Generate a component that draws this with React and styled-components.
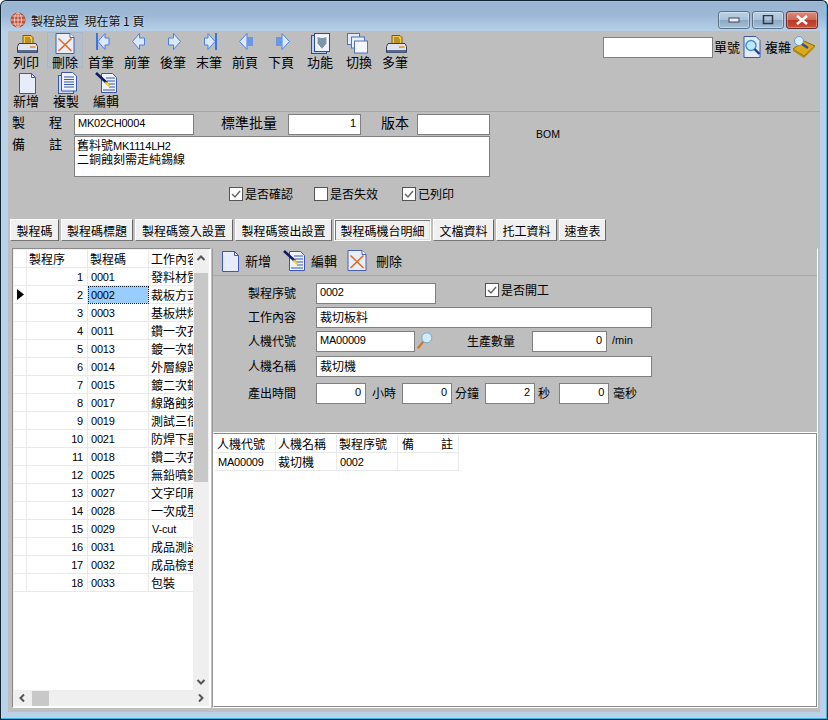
import React from 'react';
import styled, { createGlobalStyle } from 'styled-components';

const FONT = `"Noto Sans CJK TC", "Liberation Sans", sans-serif`;
const LATIN = `"Liberation Sans", "Noto Sans CJK TC", sans-serif`;

const Global = createGlobalStyle`
  html, body { margin: 0; padding: 0; background: #fff; }
  body { font-family: ${FONT}; font-size: 12px; color: #000; }
  * { box-sizing: border-box; }
`;

const Win = styled.div`
  width: 828px; height: 720px; display: flex; flex-direction: column;
  background: linear-gradient(#98b4d2 0, #9db8d5 14px, #b9d2ea 31px, #b9d2ea 100%);
  border: 1px solid #123; border-bottom-color: #0a2a3a; border-radius: 6px 6px 0 0;
  box-shadow: inset 0 0 0 1px #fff2, inset -1px -1px 0 #2ad;
  padding: 0 7px 7px 7px; overflow: hidden;
`;
const TitleBar = styled.div`height: 30px; display: flex; align-items: center; padding: 0 2px 0 2px; flex: none;`;
const TitleText = styled.div`font-size: 12px; margin-left: 5px; padding-top: 8px; color: #111; text-shadow: 0 0 3px #dbe8f5; white-space: pre;`;
const TitleSpacer = styled.div`flex: 1;`;
const WinBtns = styled.div`display: flex; gap: 2px; margin-top: 8px;`;
const WinBtn = styled.div`
  width: 32px; height: 18px; border: 1px solid ${p => p.$close ? '#6b2a2a' : '#5f7387'}; border-radius: 3px;
  background: ${p => p.$close ? 'linear-gradient(#d88b7c, #cd6a58 48%, #b93a24 52%, #c9503e)' : 'linear-gradient(#bcd0e4, #a9c2da 48%, #8ba8c4 52%, #a6c0d8)'};
  box-shadow: inset 0 0 0 1px #ffffff55; display: flex; align-items: center; justify-content: center;
`;

const Client = styled.div`flex: 1; min-height: 0; background: #bebebe; display: flex; flex-direction: column;`;
const Toolbar = styled.div`height: 81px; flex: none; display: flex; border-bottom: 1px solid #a6a6a6; justify-content: space-between;`;
const ToolRows = styled.div`display: flex; flex-direction: column;`;
const ToolRow = styled.div`display: flex; gap: ${p => p.$gap || 0}px; height: 39px; padding-top: 1px;`;
const ToolBtn = styled.div`
  width: ${p => p.$w || 36}px; height: 36px; display: flex; flex-direction: column; align-items: center; flex: none;
  margin-right: ${p => p.$mr || 0}px;
  font-size: 13px; line-height: 14px; white-space: nowrap; padding-top: 1px;
  ${p => p.$hot ? 'background: #b4bfca; box-shadow: inset 0 0 0 1px #a9b8c6;' : ''}
`;
const ToolIcon = styled.svg`width: ${p => p.$s || 24}px; height: 22px; flex: none; display: block;`;
const Search = styled.div`display: flex; align-items: center; height: 26px; margin-top: 3px; padding-right: 5px; font-size: 13px;`;
const SearchInput = styled.div`width: 110px; height: 21px; background: #fff; border: 1px solid #808080;`;
const SearchLabel = styled.span`margin: 0 2px 0 1px; line-height: 14px;`;

const Header = styled.div`height: 107px; flex: none; display: flex; flex-direction: column; padding-top: 2px;`;
const HeaderTop = styled.div`display: flex;`;
const HeaderLeft = styled.div`display: flex; flex-direction: column; gap: 1px;`;
const HeaderRow = styled.div`display: flex; align-items: flex-start;`;
const SpacedLabel = styled.div`
  width: 50px; margin: 0 12px 0 4px; display: flex; justify-content: space-between; font-size: 13px; line-height: 16px;
`;
const BigLabel = styled.div`font-size: 14px; line-height: 17px; margin: 0 ${p => p.$r}px 0 ${p => p.$l}px; white-space: nowrap;`;
const Field = styled.div`
  width: ${p => p.$w}px; height: 21px; flex: none; background: #fff; border: 1px solid #808080; overflow: hidden; white-space: nowrap;
  padding: 0 ${p => p.$right ? '4px' : '3px'}; text-align: ${p => p.$right ? 'right' : 'left'};
  font-family: ${p => p.$latin ? LATIN : FONT}; font-size: ${p => p.$latin ? '11px' : '12px'}; line-height: 17px;
  ${p => p.$latin ? 'letter-spacing: -0.2px;' : ''}
`;
const Memo = styled.div`
  width: 416px; height: 41px; background: #fff; border: 1px solid #808080; padding: 1px 2px; font-size: 12px; line-height: 14px; white-space: pre-line;
`;
const Latin = styled.span`font-family: ${LATIN}; font-size: 11px; line-height: 0; letter-spacing: -0.2px;`;
const Bom = styled.div`font-family: ${LATIN}; font-size: 10.500px; margin: 13px 0 0 46px; line-height: 14px;`;
const ChecksRow = styled.div`display: flex; padding-left: 221px; margin-top: 10px; height: 14px;`;
const Check = styled.div`display: flex; align-items: center; gap: 2px; font-size: 12px; line-height: 14px; margin-right: ${p => p.$mr || 0}px; white-space: nowrap;`;
const Box = styled.svg`width: 14px; height: 14px; flex: none; display: block;`;

const Tabs = styled.div`display: flex; height: 22px; flex: none; padding-left: 2px; gap: 2px;`;
const Tab = styled.div`
  width: ${p => p.$w}px; height: 22px; display: flex; align-items: center; justify-content: center; white-space: nowrap; font-size: 12px;
  background: #f0f0f0; border: 1px solid; border-color: #fff #666 #777 #fff;
  ${p => p.$active ? 'border-color: #fdfdfd; box-shadow: inset 1px 1px 0 #777, inset -1px -1px 0 #ddd; padding-top: 1px;' : ''}
`;

const Main = styled.div`flex: 1; min-height: 0; display: flex; padding: 7px 2px 4px 4px; gap: 1px;`;
const Frame = styled.div`
  border: 1px solid; border-color: #8a8a8a #fff #fff #8a8a8a; background: #fff; padding: 1px; display: flex; flex-direction: column;
  box-shadow: inset 1px 1px 0 #f0f0f0;
`;
const LeftFrame = styled(Frame)`width: 199px; flex: none;`;
const RightFrame = styled(Frame)`flex: 1; padding: 0; background: #bebebe; border-top-color: #bebebe; box-shadow: none; border-left-color: #9a9a9a;`;
const GridArea = styled.div`flex: 1; min-height: 0; display: flex;`;
const GridBody = styled.div`width: 179px; flex: none; overflow: hidden; background: #fff;`;
const GridRow = styled.div`display: flex; height: 18px;`;
const Cell = styled.div`
  width: ${p => p.$w}px; flex: none; height: 18px; overflow: hidden; white-space: nowrap;
  border-right: 1px solid #e9e9e9; border-bottom: 1px solid #e9e9e9;
  padding: 0 ${p => p.$right ? '4px' : p.$latin ? '3px' : '2px'};
  text-align: ${p => p.$right ? 'right' : 'left'}; line-height: 17px; font-size: 12px;
  font-family: ${p => p.$latin ? LATIN : FONT};
  ${p => p.$latin ? 'font-size: 11px; line-height: 18px; letter-spacing: -0.2px;' : ''}
  ${p => p.$sel ? 'background: #99ccff; outline: 1px dotted #123; outline-offset: -1px;' : ''}
`;
const IndCell = styled(Cell)`padding: 0; display: flex; align-items: center; justify-content: center;`;
const ClipCell = styled(Cell)`border-right: 0;`;
const VScroll = styled.div`width: 16px; flex: none; background: #efefef; display: flex; flex-direction: column; align-items: center; padding: 0 1px;`;
const VThumb = styled.div`width: 14px; height: 209px; background: #c8c8c8; margin-top: 7px;`;
const Arrow = styled.svg`width: 16px; height: 16px; display: block; flex: none;`;
const VFill = styled.div`flex: 1;`;
const HScroll = styled.div`height: 16px; flex: none; background: #efefef; display: flex; align-items: center;`;
const HThumb = styled.div`width: 17px; height: 15px; background: #c8c8c8; margin-left: 2px;`;
const HFill = styled.div`flex: 1;`;

const SubBar = styled.div`height: 27px; flex: none; display: flex; align-items: flex-start; padding: 1px 0 0 4px; border-bottom: 1px solid #a8a8a8; font-size: 13px;`;
const SubItem = styled.div`display: flex; align-items: center; gap: ${p => p.$gap}px; width: ${p => p.$w ? p.$w + 'px' : 'auto'}; line-height: 16px;`;
const Form = styled.div`height: 157px; flex: none; display: flex; flex-direction: column; padding: 7px 0 0 35px; border-bottom: 1px solid #fff;`;
const FormRow = styled.div`display: flex; align-items: flex-start; margin-bottom: ${p => p.$mb ?? 3}px; height: 21px;`;
const FormLabel = styled.div`width: 68px; flex: none; line-height: 19px; font-size: 12px;`;
const Inline = styled.div`line-height: 19px; font-size: ${p => p.$latin ? '11px' : '12px'}; font-family: ${p => p.$latin ? LATIN : FONT}; margin: 0 ${p => p.$r || 0}px 0 ${p => p.$l || 0}px; white-space: nowrap;`;
const TableArea = styled.div`flex: 1; background: #fff; padding: 1px 0 0 1px; border: 1px solid #8a8a8a; border-left-color: #fff;`;
const SpacedCell = styled.div`display: flex; justify-content: space-between; padding: 0 3px 0 2px;`;
const MagBox = styled.svg`width: 20px; height: 20px; flex: none; display: block;`;

const P = ({ children, s }) => <ToolIcon $s={s} viewBox={`0 0 ${s || 24} 22`}>{children}</ToolIcon>;
const PrinterI = () => <P>
  <path d="M9 2.500h8l2 2v6H9z" fill="#f4c94a" stroke="#7a5a10" />
  <path d="M11 5h5M11 7h6M11 9h6" stroke="#7a5a10" />
  <path d="M5 10.500h17l1.500 3v6H3.500v-6z" fill="#dfe4ee" stroke="#33415e" />
  <rect x="4" y="17" width="19" height="2.500" fill="#5a6a8e" />
  <path d="M16 14h5.500" stroke="#e8892a" strokeWidth="1.300" />
</P>;
const DocBase = ({ children }) => <P>
  <path d="M3 .5h14l4 4v16H3z" fill="#e9eefb" stroke="#4a5fb0" />
  <path d="M17 .5v4h4" fill="#fff" stroke="#4a5fb0" />
  {children}
</P>;
const DeleteI = () => <DocBase><path d="M5.500 5.500l13 12.500M18.500 5.500L5.500 18" stroke="#e46a1e" strokeWidth="1.600" /></DocBase>;
const NewI = () => <P>
  <path d="M5.500 1.500h12l4 4v16h-16z" fill="#e8ecfa" stroke="#3f55b5" />
  <path d="M17.500 1.500v4h4z" fill="#fff" stroke="#3f55b5" />
</P>;
const arrowFill = '#dce8fc', arrowStroke = '#4f7fe0';
const FirstI = () => <P><rect x="7" y="0" width="2" height="17" fill="#3e73e6" /><path d="M9 8.500l7-8v4.500h4v7h-4v4.500z" fill={arrowFill} stroke={arrowStroke} /></P>;
const PrevI = () => <P><path d="M7.500 8.500l7-8v4.500h5v7h-5v4.500z" fill={arrowFill} stroke={arrowStroke} /></P>;
const NextI = () => <P><path d="M19.500 8.500l-7-8v4.500h-5v7h5v4.500z" fill={arrowFill} stroke={arrowStroke} /></P>;
const LastI = () => <P><rect x="18" y="0" width="2" height="17" fill="#3e73e6" /><path d="M18 8.500l-7-8v4.500H7.500v7H11v4.500z" fill={arrowFill} stroke={arrowStroke} /></P>;
const PrevPageI = () => <P><path d="M6.500 8.500l7.500-8v16z" fill={arrowFill} stroke={arrowStroke} /><rect x="14" y="4" width="6" height="9" fill="#6a97e8" /></P>;
const NextPageI = () => <P><path d="M20.500 8.500l-7.500-8v16z" fill={arrowFill} stroke={arrowStroke} /><rect x="7" y="4" width="6" height="9" fill="#6a97e8" /></P>;
const FuncI = () => <P>
  <rect x="3.500" y="2.500" width="15" height="18" fill="#bcd0f4" stroke="#2c4aa6" />
  <rect x="6.500" y=".5" width="15" height="18" fill="#eef2fd" stroke="#2c4aa6" />
  <path d="M9 3.500l5 1 5-1v7l-5 6-5-6z" fill="#7d95a8" stroke="#fff" />
</P>;
const SwitchI = () => <P>
  <rect x=".5" y=".5" width="12" height="11" fill="#e2e9f8" stroke="#4f72b8" />
  <rect x="4.500" y="4" width="13" height="11" fill="#eaf0fb" stroke="#4f72b8" />
  <rect x="7.500" y="8" width="13" height="12" fill="#f3f6fd" stroke="#4f72b8" />
</P>;
const CopyI = () => <P>
  <rect x="4.500" y="3.500" width="15" height="18" fill="#cdd9f5" stroke="#3a55ad" />
  <path d="M7.500.5h11l4 3.500v15h-15z" fill="#eef2fd" stroke="#3a55ad" />
  <path d="M10 5h10M10 7.500h10M10 10h10M10 12.500h10M10 15h10" stroke="#3a55ad" />
</P>;
const EditI = () => <P>
  <path d="M7.500 1.500h11l4 4v15h-15z" fill="#eef2fd" stroke="#3a55ad" />
  <path d="M12 6h9M13 9h8M14 12h7M15 15h6M9 18h12" stroke="#3a55ad" />
  <path d="M2 1l11 10" stroke="#101a66" strokeWidth="2.600" />
  <path d="M12 9.500l4.500 4.500-1.500 1-4.500-3.500z" fill="#e8d832" />
</P>;
const FindDocI = () => <P s={22}>
  <path d="M2 .5h12l4 4v17H2z" fill="#e3ebfb" stroke="#3a55ad" />
  <circle cx="9" cy="9.500" r="5" fill="#bfe8fb" stroke="#3d8fd0" strokeWidth="1.400" />
  <path d="M12.500 13l5 5" stroke="#263a9a" strokeWidth="2.400" />
</P>;
const ComplexI = () => <P s={22}>
  <path d="M0 13l11-8 11 5-11 10z" fill="#d8aa1c" stroke="#8a6a10" />
  <path d="M0 13v2l11 7 11-11v-1l-11 10z" fill="#b58a14" />
  <circle cx="6" cy="5" r="4.500" fill="#d6eefc" stroke="#6aa0c8" />
  <path d="M9 8l6 4" stroke="#3a4a9a" strokeWidth="2.500" />
</P>;
const MagI = () => <MagBox viewBox="0 0 22 22">
  <circle cx="13" cy="7.500" r="5.500" fill="#cfeefd" stroke="#7a9fc4" />
  <path d="M9 12l-6 7" stroke="#c9772a" strokeWidth="2.400" />
</MagBox>;

const ChevUp = () => <Arrow viewBox="0 0 16 16"><path d="M4.500 10l3.500-3.500 3.500 3.500" fill="none" stroke="#555" strokeWidth="2" /></Arrow>;
const ChevDown = () => <Arrow viewBox="0 0 16 16"><path d="M4.500 6l3.500 3.500 3.500-3.500" fill="none" stroke="#555" strokeWidth="2" /></Arrow>;
const ChevLeft = () => <Arrow viewBox="0 0 16 16"><path d="M10 4.500l-3.500 3.500 3.500 3.500" fill="none" stroke="#555" strokeWidth="2" /></Arrow>;
const ChevRight = () => <Arrow viewBox="0 0 16 16"><path d="M6 4.500l3.500 3.500-3.500 3.500" fill="none" stroke="#555" strokeWidth="2" /></Arrow>;

const CheckBox = ({ on }) => <Box viewBox="0 0 14 14">
  <rect x=".5" y=".5" width="13" height="13" fill="#fff" stroke="#555" />
  {on && <path d="M3 7l3 3 5-6" fill="none" stroke="#666" strokeWidth="1.500" />}
</Box>;

const tools1 = [
  ['列印', PrinterI, 36, false, 3], ['刪除', DeleteI, 36, true], ['首筆', FirstI], ['前筆', PrevI], ['後筆', NextI], ['末筆', LastI],
  ['前頁', PrevPageI], ['下頁', NextPageI], ['功能', FuncI, 42], ['切換', SwitchI], ['多筆', PrinterI],
];
const tools2 = [['新增', NewI], ['複製', CopyI], ['編輯', EditI]];

const rows = [
  ['0001', '發料材質'], ['0002', '裁板方式'], ['0003', '基板烘烤'], ['0011', '鑽一次孔'], ['0013', '鍍一次銅'],
  ['0014', '外層線路'], ['0015', '鍍二次銅'], ['0017', '線路蝕刻'], ['0019', '測試三倍'], ['0021', '防焊下墨'],
  ['0018', '鑽二次孔'], ['0025', '無鉛噴錫'], ['0027', '文字印刷'], ['0028', '一次成型'], ['0029', 'V-cut'],
  ['0031', '成品測試'], ['0032', '成品檢查'], ['0033', '包裝'],
];
const tabs = [['製程碼', 49], ['製程碼標題', 72], ['製程碼簽入設置', 98], ['製程碼簽出設置', 97], ['製程碼機台明細', 97, true], ['文檔資料', 61], ['托工資料', 61], ['速查表', 47]];

export default function App() {
  return (
    <Win>
      <Global />
      <TitleBar>
        <svg width="16" height="16" viewBox="0 0 18 18" style={{ marginTop: 8 }}>
          <circle cx="9" cy="9" r="8.500" fill="#c0503a" />
          <path d="M1 9h16M9 1v16M3 4.500h12M3 13.500h12" stroke="#f1d8cc" strokeWidth="1" />
          <ellipse cx="9" cy="9" rx="4" ry="8" fill="none" stroke="#f1d8cc" />
        </svg>
        <TitleText>製程設置  現在第 1 頁</TitleText>
        <TitleSpacer />
        <WinBtns>
          <WinBtn><svg width="12" height="6"><rect x="1" y="1" width="10" height="4" fill="#eef" stroke="#445" /></svg></WinBtn>
          <WinBtn><svg width="12" height="10"><rect x="1.500" y=".5" width="9" height="8" fill="none" stroke="#334" strokeWidth="1.500" /></svg></WinBtn>
          <WinBtn $close><svg width="14" height="10"><path d="M2 1l10 8M12 1L2 9" stroke="#fff" strokeWidth="2.500" /></svg></WinBtn>
        </WinBtns>
      </TitleBar>
      <Client>
        <Toolbar>
          <ToolRows>
            <ToolRow>
              {tools1.map(([t, I, w, hot, mr]) => <ToolBtn key={t} $w={w} $hot={hot} $mr={mr}><I />{t}</ToolBtn>)}
            </ToolRow>
            <ToolRow $gap={4}>
              {tools2.map(([t, I]) => <ToolBtn key={t}><I />{t}</ToolBtn>)}
            </ToolRow>
          </ToolRows>
          <Search>
            <SearchInput />
            <SearchLabel>單號</SearchLabel>
            <FindDocI />
            <SearchLabel>複雜</SearchLabel>
            <ComplexI />
          </Search>
        </Toolbar>
        <Header>
          <HeaderTop>
            <HeaderLeft>
              <HeaderRow>
                <SpacedLabel><span>製</span><span>程</span></SpacedLabel>
                <Field $w={120} $latin>MK02CH0004</Field>
                <BigLabel $l={27} $r={11}>標準批量</BigLabel>
                <Field $w={73} $latin $right>1</Field>
                <BigLabel $l={20} $r={8}>版本</BigLabel>
                <Field $w={73} />
              </HeaderRow>
              <HeaderRow>
                <SpacedLabel><span>備</span><span>註</span></SpacedLabel>
                <Memo>舊料號<Latin>MK1114LH2</Latin>{'\n'}二銅蝕刻需走純錫線</Memo>
              </HeaderRow>
            </HeaderLeft>
            <Bom>BOM</Bom>
          </HeaderTop>
          <ChecksRow>
            <Check $mr={21}><CheckBox on />是否確認</Check>
            <Check $mr={24}><CheckBox />是否失效</Check>
            <Check><CheckBox on />已列印</Check>
          </ChecksRow>
        </Header>
        <Tabs>
          {tabs.map(([t, w, a]) => <Tab key={t} $w={w} $active={a}>{t}</Tab>)}
        </Tabs>
        <Main>
          <LeftFrame>
            <GridArea>
              <GridBody>
                <GridRow>
                  <Cell $w={13} />
                  <Cell $w={61}>製程序</Cell>
                  <Cell $w={61}>製程碼</Cell>
                  <ClipCell $w={44}>工作內容</ClipCell>
                </GridRow>
                {rows.map(([c, n], i) => (
                  <GridRow key={c}>
                    <IndCell $w={13}>
                      {i === 1 && <svg width="7" height="11"><path d="M0 0l7 5.500L0 11z" fill="#000" /></svg>}
                    </IndCell>
                    <Cell $w={61} $right $latin>{i + 1}</Cell>
                    <Cell $w={61} $latin $sel={i === 1}>{c}</Cell>
                    <ClipCell $w={44} $latin={n === 'V-cut'}>{n}</ClipCell>
                  </GridRow>
                ))}
              </GridBody>
              <VScroll>
                <ChevUp />
                <VThumb />
                <VFill />
                <ChevDown />
              </VScroll>
            </GridArea>
            <HScroll>
              <ChevLeft />
              <HThumb />
              <HFill />
              <ChevRight />
            </HScroll>
          </LeftFrame>
          <RightFrame>
            <SubBar>
              <SubItem $w={65} $gap={4}><NewI />新增</SubItem>
              <SubItem $w={63} $gap={5}><EditI />編輯</SubItem>
              <SubItem $gap={7}><DeleteI />刪除</SubItem>
            </SubBar>
            <Form>
              <FormRow>
                <FormLabel>製程序號</FormLabel>
                <Field $w={120} $latin>0002</Field>
                <Inline $l={49}><Check><CheckBox on />是否開工</Check></Inline>
              </FormRow>
              <FormRow>
                <FormLabel>工作內容</FormLabel>
                <Field $w={336}>裁切板料</Field>
              </FormRow>
              <FormRow $mb={4}>
                <FormLabel>人機代號</FormLabel>
                <Field $w={99} $latin>MA00009</Field>
                <MagI />
                <Inline $l={32} $r={17}>生產數量</Inline>
                <Field $w={75} $latin $right>0</Field>
                <Inline $l={5} $latin>/min</Inline>
              </FormRow>
              <FormRow $mb={6}>
                <FormLabel>人機名稱</FormLabel>
                <Field $w={336}>裁切機</Field>
              </FormRow>
              <FormRow>
                <FormLabel>產出時間</FormLabel>
                <Field $w={50} $latin $right>0</Field>
                <Inline $l={6} $r={6}>小時</Inline>
                <Field $w={50} $latin $right>0</Field>
                <Inline $l={3} $r={6}>分鐘</Inline>
                <Field $w={50} $latin $right>2</Field>
                <Inline $l={3} $r={9}>秒</Inline>
                <Field $w={50} $latin $right>0</Field>
                <Inline $l={4}>毫秒</Inline>
              </FormRow>
            </Form>
            <TableArea>
              <GridRow>
                <Cell $w={61}>人機代號</Cell>
                <Cell $w={61}>人機名稱</Cell>
                <Cell $w={61}>製程序號</Cell>
                <Cell $w={61}><SpacedCell><span>備</span><span>註</span></SpacedCell></Cell>
              </GridRow>
              <GridRow>
                <Cell $w={61} $latin>MA00009</Cell>
                <Cell $w={61}>裁切機</Cell>
                <Cell $w={61} $latin>0002</Cell>
                <Cell $w={61} />
              </GridRow>
            </TableArea>
          </RightFrame>
        </Main>
      </Client>
    </Win>
  );
}
